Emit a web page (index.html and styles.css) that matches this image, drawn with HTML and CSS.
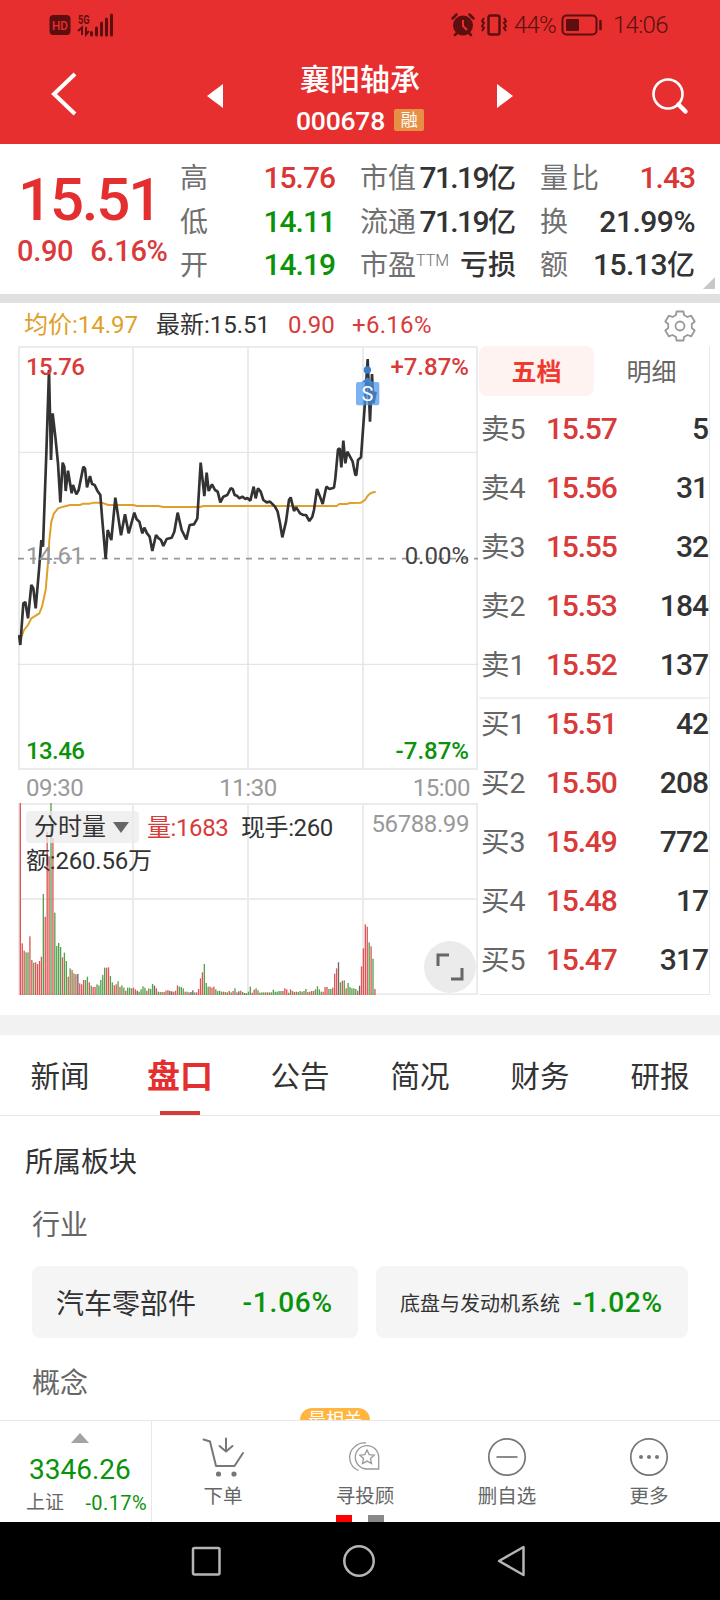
FILE: index.html
```html
<!DOCTYPE html>
<html lang="zh-CN">
<head>
    <meta charset="UTF-8" />
    <title>襄阳轴承 000678</title>
    <link rel="stylesheet" href="styles.css">
</head>
<body>
    <header>
        <div class="status-bar">
            <svg class="status-left" width="66" height="24" viewBox="0 0 66 24">
                <rect x="0.500" y="2" width="21" height="20" rx="4" fill="#5d0f0f"/>
                <text x="3" y="17" font-size="13" font-weight="500" textLength="16" lengthAdjust="spacingAndGlyphs" fill="#e72f2f">HD</text>
                <text x="29" y="10.500" font-size="13" font-weight="700" textLength="11.5" lengthAdjust="spacingAndGlyphs">5G</text>
                <path d="M29 18l4-3.500V22M37 14v7.500l3-3.500" fill="none" stroke="#5d0f0f" stroke-width="2"/>
                <path d="M42.500 19.500v2.500M47.500 15v7M52.500 10v12M57.500 6v16M62.500 2v20" fill="none" stroke="#5d0f0f" stroke-width="3" stroke-linecap="round"/>
            </svg>
            <div class="status-right">
                <svg width="24" height="24" viewBox="0 0 24 24">
                    <circle cx="12" cy="12.500" r="10" fill="#5d0f0f"/>
                    <path d="M1.500 5.500l4-4M22.500 5.500l-4-4M4 22l3-3M20 22l-3-3" stroke="#5d0f0f" stroke-width="2.500" stroke-linecap="round"/>
                    <path d="M12 7v6l4 4" fill="none" stroke="#e72f2f" stroke-width="2"/>
                </svg>
                <svg class="vibrate" width="28" height="24" viewBox="0 0 28 24">
                    <rect x="8.500" y="2.500" width="11" height="19" rx="2" fill="none" stroke="#5d0f0f" stroke-width="2.500"/>
                    <path d="M4 5l-2 3 2 2-2 3 2 2-2 3M24 5l2 3-2 2 2 3-2 2 2 3" fill="none" stroke="#5d0f0f" stroke-width="2"/>
                </svg>
                <span class="battery-text">44%</span>
                <svg class="battery" width="42" height="24" viewBox="0 0 42 24">
                    <rect x="1.500" y="2.500" width="34" height="19" rx="4" fill="none" stroke="#5d0f0f" stroke-width="2"/>
                    <rect x="5" y="6" width="13" height="12" rx="1" fill="#5d0f0f"/>
                    <path d="M39.500 8v8" stroke="#5d0f0f" stroke-width="2.500" stroke-linecap="round"/>
                </svg>
                <span class="clock">14:06</span>
            </div>
        </div>
        <div class="title-bar">
            <svg class="back" width="26" height="44" viewBox="0 0 26 44"><path d="M24 2L3 22l21 20" fill="none" stroke="#fff" stroke-width="4"/></svg>
            <svg class="prev" width="16" height="24" viewBox="0 0 16 24"><path d="M16 0v24L0 12z" fill="#fff"/></svg>
            <div class="stock-title">
                <h1>襄阳轴承</h1>
                <div class="stock-code"><span>000678</span><i>融</i></div>
            </div>
            <svg class="next" width="16" height="24" viewBox="0 0 16 24"><path d="M0 0v24l16-12z" fill="#fff"/></svg>
            <svg class="search" width="38" height="38" viewBox="0 0 38 38">
                <circle cx="17" cy="17" r="14.500" fill="none" stroke="#fff" stroke-width="2.600"/>
                <path d="M27.500 27.500l7 7" stroke="#fff" stroke-width="4.500" stroke-linecap="round"/>
            </svg>
        </div>
    </header>

    <section class="quote">
        <div class="now">
            <div class="price">15.51</div>
            <div class="change"><span>0.90</span><span>6.16%</span></div>
        </div>
        <dl class="col-a">
            <div><dt>高</dt><dd class="red">15.76</dd></div>
            <div><dt>低</dt><dd class="green">14.11</dd></div>
            <div><dt>开</dt><dd class="green">14.19</dd></div>
        </dl>
        <dl class="col-b">
            <div><dt>市值</dt><dd>71.19<b>亿</b></dd></div>
            <div><dt>流通</dt><dd>71.19<b>亿</b></dd></div>
            <div><dt>市盈<sup>TTM</sup></dt><dd><b>亏损</b></dd></div>
        </dl>
        <dl class="col-c">
            <div><dt class="wide">量比</dt><dd class="red">1.43</dd></div>
            <div><dt>换</dt><dd>21.99%</dd></div>
            <div><dt>额</dt><dd>15.13<b>亿</b></dd></div>
        </dl>
        <svg class="corner" width="12" height="12" viewBox="0 0 12 12"><path d="M12 0v12H0z" fill="#c8c8c8"/></svg>
    </section>

    <div class="chart-info">
        <span class="avg">均价:14.97</span>
        <span class="latest">最新:15.51</span>
        <span class="diff">0.90</span>
        <span class="pct">+6.16%</span>
        <svg class="gear" width="32" height="32" viewBox="0 0 32 32" fill="none" stroke="#999" stroke-width="1.800" stroke-linejoin="round">
            <path d="M12.500 1.500h7l.5 3.500 3.500 2 3.700-1.300 3.500 5.800-2.900 2.500v4l2.900 2.500-3.500 5.800-3.700-1.300-3.500 2-.5 3.500h-7l-.5-3.500-3.500-2-3.700 1.300-3.500-5.800 2.900-2.500v-4l-2.900-2.500 3.500-5.800L8.500 7 12 5z"/>
            <circle cx="16" cy="16" r="4.500"/>
        </svg>
    </div>

    <main class="trade">
        <div class="charts">
            <div class="price-chart">
                <!-- 3 units = 1px -->
                <svg width="460" height="424" viewBox="54 18 1380 1272" fill="none">
                    <path d="M54 21H1434M54 1287H1434M57 18V1290M399 18V1290M744 18V1290M1089 18V1290M1431 18V1290" stroke="#ebebeb" stroke-width="6"/>
                    <path d="M54 337H1434M54 973H1434" stroke="#e0e0e0" stroke-width="3"/>
                    <path d="M54 656H1434" stroke="#999" stroke-width="5" stroke-dasharray="18 18"/>
                    <polyline stroke="#dfa02a" stroke-width="6" stroke-linejoin="round" points="61,900 72,870 84,855 94,835 118,820 126,800 137,750 143,680 148,600 154,545 162,520 174,505 190,500 210,495 240,495 250,491 270,491 280,488 305,488 325,495 400,495 410,498 475,498 490,501 600,501 610,498 1010,498 1018,492 1040,492 1050,489 1083,488 1095,480 1105,465 1115,458 1127,455"/>
                    <polyline stroke="#333" stroke-width="8" stroke-linejoin="bevel" points="57,885 61,915 70,790 76,786 84,835 94,735 100,745 107,805 117,690 124,600 129,620 139,340 147,90 153,360 158,220 166,290 174,370 181,487 188,368 193,380 197,453 204,392 215,460 219,435 229,463 236,450 250,380 255,385 261,442 270,408 276,432 284,435 292,452 301,465 306,530 317,657 323,570 334,600 346,473 363,586 375,523 386,580 403,518 410,538 418,545 427,580 433,563 441,580 449,590 457,633 468,585 476,595 483,600 490,618 500,597 515,593 523,575 533,518 545,570 559,598 569,555 582,553 592,535 602,368 613,468 620,398 626,453 636,433 645,450 653,455 661,487 670,470 682,465 692,445 698,447 704,465 712,468 718,475 727,470 736,477 742,474 751,482 761,440 767,475 774,445 782,455 790,480 800,487 810,485 825,500 833,515 840,550 847,592 858,545 867,480 872,472 882,513 888,502 900,520 910,525 918,525 928,543 937,530 942,510 951,447 960,470 968,492 979,440 988,447 1002,443 1006,415 1014,328 1019,325 1024,382 1030,302 1036,370 1042,335 1058,365 1066,405 1069,405 1074,360 1083,352 1094,200 1103,57 1110,245 1116,102 1120,190 1127,155"/>
                    <circle cx="1102" cy="90" r="11" fill="#3b7ccb"/>
                    <path d="M1085 127l17-15 17 15z" fill="#4484cf"/>
                    <rect x="1068" y="126" width="70" height="70" rx="6" fill="#4a94ec" fill-opacity=".72"/>
                </svg>
                <span class="label high">15.76</span>
                <span class="label mid">14.61</span>
                <span class="label low">13.46</span>
                <span class="label pct-high">+7.87%</span>
                <span class="label pct-mid">0.00%</span>
                <span class="label pct-low">-7.87%</span>
                <span class="sell-mark">S</span>
            </div>
            <div class="times"><span>09:30</span><span>11:30</span><span>15:00</span></div>
            <div class="volume-chart">
                <svg width="460" height="192" viewBox="54 219 1380 576" fill="none">
                    <path d="M54 222H1434M54 507H1434M54 793H1434M57 219V795M399 219V795M744 219V795M1089 219V795M1431 219V795" stroke="#ebebeb" stroke-width="6"/>
                    <g id="bars"></g>
                </svg>
                <div class="volume-info">
                    <span class="picker">分时量<svg width="16" height="11" viewBox="0 0 16 11"><path d="M0 0h16L8 11z" fill="#666"/></svg></span>
                    <span class="vol">量:1683</span>
                    <span class="hand">现手:260</span>
                </div>
                <span class="amount">额:260.56万</span>
                <span class="volume-max">56788.99</span>
                <svg class="expand" width="52" height="52" viewBox="0 0 52 52">
                    <circle cx="26" cy="26" r="26" fill="#ebebeb"/>
                    <path d="M14 25V14h11M27 38h11V27" fill="none" stroke="#666" stroke-width="3"/>
                </svg>
            </div>
        </div>
        <aside class="levels">
            <div class="level-tabs"><span class="on">五档</span><span>明细</span></div>
            <ul class="sell">
                <li><span>卖5</span><em>15.57</em><strong>5</strong></li>
                <li><span>卖4</span><em>15.56</em><strong>31</strong></li>
                <li><span>卖3</span><em>15.55</em><strong>32</strong></li>
                <li><span>卖2</span><em>15.53</em><strong>184</strong></li>
                <li><span>卖1</span><em>15.52</em><strong>137</strong></li>
            </ul>
            <ul class="buy">
                <li><span>买1</span><em>15.51</em><strong>42</strong></li>
                <li><span>买2</span><em>15.50</em><strong>208</strong></li>
                <li><span>买3</span><em>15.49</em><strong>772</strong></li>
                <li><span>买4</span><em>15.48</em><strong>17</strong></li>
                <li><span>买5</span><em>15.47</em><strong>317</strong></li>
            </ul>
        </aside>
    </main>

    <nav class="tabs">
        <a>新闻</a>
        <a class="active">盘口</a>
        <a>公告</a>
        <a>简况</a>
        <a>财务</a>
        <a>研报</a>
    </nav>

    <section class="sectors">
        <h2>所属板块</h2>
        <h3>行业</h3>
        <div class="cards">
            <div class="card first"><span>汽车零部件</span><em>-1.06%</em></div>
            <div class="card second"><span class="small">底盘与发动机系统</span><em>-1.02%</em></div>
        </div>
        <h3 class="concept">概念</h3>
        <div class="hot-tag">最相关</div>
    </section>

    <footer>
        <div class="index">
            <svg width="18" height="10" viewBox="0 0 18 10"><path d="M9 0l9 10H0z" fill="#a3a3a3"/></svg>
            <div class="index-value">3346.26</div>
            <div class="index-row"><span>上证</span><em>-0.17%</em></div>
        </div>
        <div class="action">
            <svg width="44" height="40" viewBox="0 0 44 40" fill="none" stroke="#777" stroke-width="2" stroke-linecap="round" stroke-linejoin="round">
                <path d="M2.500 2.500l6.500 2L15 29h18.500L42 16"/>
                <path d="M25 1.500V14M18.500 9l6.500 5.500L31.500 9"/>
                <circle cx="17.500" cy="37" r="1.600" fill="#777"/><circle cx="33" cy="37" r="1.600" fill="#777"/>
            </svg>
            <span>下单</span>
        </div>
        <div class="action">
            <svg width="40" height="40" viewBox="0 0 40 40" fill="none" stroke="#999" stroke-width="1.300">
                <path d="M22 32h11.700V20.300a11.700 11.700 0 1 0-11.700 11.700z"/>
                <path d="M13.500 33.500A14 14 0 0 1 10 9.500a14 14 0 0 1 11-3.500"/>
                <path d="M22 13l2.200 4.600 5 .6-3.700 3.400 1 5-4.500-2.500-4.500 2.500 1-5-3.700-3.400 5-.6z"/>
            </svg>
            <span>寻投顾</span>
        </div>
        <div class="action">
            <svg width="40" height="40" viewBox="0 0 40 40" fill="none" stroke="#777" stroke-width="1.700"><circle cx="20" cy="20" r="18.200"/><path d="M9.500 20h21"/></svg>
            <span>删自选</span>
        </div>
        <div class="action">
            <svg width="40" height="40" viewBox="0 0 40 40"><circle cx="20" cy="20" r="18.200" fill="none" stroke="#777" stroke-width="1.700"/><g fill="#777"><circle cx="12" cy="20" r="2"/><circle cx="20" cy="20" r="2"/><circle cx="28" cy="20" r="2"/></g></svg>
            <span>更多</span>
        </div>
        <div class="pager"><i class="on"></i><i></i></div>
    </footer>

    <div class="system-nav">
        <svg width="32" height="32" viewBox="0 0 32 32"><rect x="3" y="3" width="26.500" height="26.500" rx="1.500"/></svg>
        <svg width="34" height="34" viewBox="0 0 34 34"><circle cx="17" cy="17" r="14.700"/></svg>
        <svg width="32" height="34" viewBox="0 0 32 34"><path d="M27.500 3v28L3 17z" stroke-linejoin="round"/></svg>
    </div>

    <script>
        // 每分钟成交量: 高度 + 颜色 (r 涨, g 跌, k 平)
        const volumes = "576r 155r 133r 128g 128g 176r 105r 97g 98r 93r 102r 115r 303g 235r 490r 416r 576g 470r 247g 147g 156g 144g 113r 127g 102g 55r 80g 75r 65g 62r 63k 35r 32r 45r 45g 55g 38r 28g 24r 24r 32g 29g 45g 60g 82g 82r 83r 57g 38g 29r 32r 41g 24r 29g 22g 13r 22g 22g 20g 22r 17r 13k 10g 17g 26g 22g 13r 20g 18g 33g 28k 20r 10g 9g 9r 9g 13r 15r 12k 11k 10r 13r 29r 25g 24g 20g 10r 10g 8r 9k 14k 8g 8r 18r 50r 68r 93g 36g 25g 25r 22r 25r 17g 12g 13g 10g 10r 9g 8r 12r 8g 12r 20g 8r 11k 13r 9g 6k 5k 10g 25g 7r 16r 20g 14r 7g 8g 8g 8r 8g 8r 8g 16g 10g 10g 12g 12g 12r 20r 17r 7g 17r 12g 9r 10r 9g 12g 10g 12r 18g 9r 10g 12r 12r 17g 26g 17g 10g 10r 24r 24r 18g 18g 22r 64r 80r 98k 38g 43r 44g 20r 36g 24g 20g 20g 18g 13r 28k 86r 140r 212r 205r 158g 146r 109g 18r".split(" ");
        const colors = { r: "#df5555", g: "#55a04c", k: "#666" };
        const bars = document.getElementById("bars");

        volumes.forEach((item, i) => {
            const h = parseInt(item);
            const rect = document.createElementNS("http://www.w3.org/2000/svg", "rect");
            rect.setAttribute("x", 59 + i * 5.75);
            rect.setAttribute("y", 795 - h);
            rect.setAttribute("width", 4);
            rect.setAttribute("height", h);
            rect.setAttribute("fill", colors[item.slice(-1)]);
            bars.appendChild(rect);
        });
    </script>
</body>
</html>
```
FILE: styles.css
```css
* {
    box-sizing: border-box;
}
body {
    margin: 0;
    width: 720px;
    height: 1600px;
    overflow: hidden;
    background: #fff;
    color: #333;
    font-family: Roboto, "Noto Sans CJK SC", sans-serif;
    white-space: nowrap;
}
svg {
    display: block;
    flex: none;
}
h1, h2, h3, dl, dd, ul {
    margin: 0;
    padding: 0;
    font-weight: 400;
}
em, i {
    font-style: normal;
}
b {
    font-size: 28px;
    font-weight: 500;
    letter-spacing: 0;
}
.red {
    color: #db3636;
}
.green {
    color: #0a930a;
}

/* 顶部 */
header {
    height: 144px;
    background: #e72f2f;
}
.status-bar {
    height: 48px;
    padding: 1px 50px 0 49px;
    display: flex;
    justify-content: space-between;
    align-items: center;
    color: #5d0f0f;
    font-size: 24px;
}
.status-left {
    fill: #5d0f0f;
}
.status-right {
    display: flex;
    align-items: center;
}
.vibrate {
    margin-left: 5px;
}
.battery-text {
    margin-left: 6px;
    width: 44px;
    font-weight: 300;
    letter-spacing: -0.8px;
}
.battery {
    margin-left: 3px;
}
.clock {
    margin-left: 10px;
    width: 57px;
    font-weight: 300;
    letter-spacing: -0.7px;
}
.title-bar {
    height: 96px;
    padding: 0 31px 0 51px;
    display: flex;
    align-items: flex-start;
    color: #fff;
}
.back {
    margin-top: 24px;
}
.prev {
    margin: 36px 0 0 130px;
}
.stock-title {
    width: 274px;
    padding-top: 11px;
    text-align: center;
}
.stock-title h1 {
    font-size: 30px;
    line-height: 42px;
    font-weight: 500;
}
.stock-code {
    display: flex;
    justify-content: center;
    align-items: center;
    height: 38px;
    font-size: 26.500px;
    font-weight: 500;
    letter-spacing: -0.2px;
}
.stock-code i {
    width: 30px;
    height: 22px;
    margin-left: 9px;
    border-radius: 2px;
    background: #e69046;
    font-size: 17px;
    font-weight: 400;
    line-height: 23px;
}
.next {
    margin-top: 36px;
}
.search {
    margin: 29px 0 0 auto;
}

/* 行情 */
.quote {
    position: relative;
    height: 159px;
    padding-top: 12px;
    border-bottom: 9px solid #e0e0e0;
    display: flex;
}
.now {
    width: 180px;
    padding-left: 17px;
    color: #e32f2f;
    font-weight: 500;
}
.price {
    margin: 9px 0 0 1px;
    font-size: 60px;
    line-height: 70px;
    letter-spacing: -2.200px;
}
.change {
    display: flex;
    gap: 17px;
    font-size: 29px;
    line-height: 32px;
    letter-spacing: -0.3px;
    color: #d93a3a;
}
.quote dl > div {
    display: flex;
    justify-content: space-between;
    height: 43.500px;
    line-height: 43.500px;
}
.quote dt {
    padding-top: 1px;
    font-size: 28px;
    color: #707070;
}
.quote dt.wide {
    letter-spacing: 3px;
}
.quote dd {
    font-size: 30px;
    font-weight: 500;
    letter-spacing: -1px;
}
.quote sup {
    font-size: 16px;
    font-weight: 300;
    line-height: 0;
    vertical-align: 9px;
}
.col-a {
    width: 155px;
}
.col-b {
    width: 156px;
    margin-left: 25px;
}
.quote .col-b dd {
    letter-spacing: -1.600px;
}
.quote .col-b b {
    letter-spacing: 0;
}
.col-c {
    width: 155px;
    margin-left: 24px;
}
.col-c div:nth-child(n + 2) dd {
    letter-spacing: -0.5px;
}
.corner {
    position: absolute;
    right: 5px;
    bottom: 5px;
}

/* 分时图 */
.chart-info {
    height: 43px;
    padding: 0 24px 0 24px;
    display: flex;
    align-items: center;
    font-size: 24px;
    line-height: 43px;
}
.chart-info span {
    padding-top: 2px;
}
.avg {
    width: 132px;
    color: #dfa02a;
}
.latest {
    width: 132px;
}
.diff {
    width: 64px;
    color: #d93a3a;
}
.pct {
    color: #d93a3a;
    letter-spacing: 0.3px;
}
.gear {
    margin: 2px 0 0 auto;
}
.trade {
    display: flex;
    height: 669px;
    padding-left: 18px;
}
.charts {
    width: 461px;
}
.price-chart,
.volume-chart {
    position: relative;
}
.label {
    position: absolute;
    font-size: 24px;
    line-height: 28px;
    font-weight: 500;
}
.high,
.mid,
.low {
    left: 8px;
    letter-spacing: -0.6px;
}
.pct-high,
.pct-mid,
.pct-low {
    right: 10px;
}
.high,
.pct-high {
    top: 7px;
    color: #d93a3a;
}
.mid,
.pct-mid {
    top: 196px;
    font-weight: 400;
}
.mid {
    color: #999;
}
.pct-mid {
    color: #444;
}
.low,
.pct-low {
    bottom: 5px;
    color: #0a930a;
}
.sell-mark {
    position: absolute;
    left: 338px;
    top: 37px;
    width: 23px;
    color: #fff;
    font-size: 20px;
    line-height: 23px;
    text-align: center;
}
.times {
    display: flex;
    justify-content: space-between;
    height: 33px;
    padding: 0 9px 0 8px;
    color: #999;
    font-size: 24px;
    line-height: 36px;
    letter-spacing: -0.5px;
}
.volume-info {
    position: absolute;
    left: 8px;
    top: 8px;
    display: flex;
    font-size: 24px;
    line-height: 34px;
    height: 32px;
    letter-spacing: -0.4px;
}
.picker {
    display: flex;
    align-items: center;
    gap: 7px;
    width: 113px;
    padding-left: 8px;
    border-radius: 4px;
    background: rgba(235, 235, 235, 0.75);
    letter-spacing: 0;
}
.vol {
    width: 94px;
    margin-left: 8px;
    color: #d93a3a;
}
.amount {
    position: absolute;
    left: 8px;
    top: 42px;
    font-size: 24px;
    line-height: 32px;
    letter-spacing: -0.2px;
}
.volume-max {
    position: absolute;
    right: 10px;
    top: 5px;
    color: #999;
    font-size: 24px;
    line-height: 32px;
    letter-spacing: -0.4px;
}
.expand {
    position: absolute;
    right: 3px;
    bottom: 2px;
}

/* 五档 */
.levels {
    width: 231px;
    height: 649px;
    border-right: 1px solid #e8e8e8;
    border-bottom: 1px solid #e8e8e8;
}
.level-tabs {
    display: flex;
    height: 53px;
    font-size: 25px;
    line-height: 53px;
    text-align: center;
    color: #666;
}
.level-tabs span {
    width: 115px;
    height: 50px;
    border-radius: 8px;
}
.level-tabs .on {
    background: #fff3f2;
    color: #f03a30;
    font-weight: 700;
}
.levels ul {
    list-style: none;
    height: 295px;
}
.levels .buy {
    background: linear-gradient(#f0f0f0, #f0f0f0) 0 3px / 100% 2px no-repeat;
}
.levels li {
    display: flex;
    height: 59px;
    padding: 0 1px 0 2px;
    font-size: 30px;
    line-height: 59px;
}
.levels li span {
    width: 65px;
    padding-top: 1px;
    font-size: 28.500px;
    color: #666;
}
.levels em {
    color: #d93a3a;
    font-weight: 500;
    letter-spacing: -1.200px;
}
.levels strong {
    margin-left: auto;
    font-weight: 500;
    letter-spacing: -1px;
}

/* 资讯标签 */
.tabs {
    display: flex;
    height: 101px;
    border-top: 20px solid #f2f2f2;
    border-bottom: 1px solid #e8e8e8;
}
.tabs a {
    position: relative;
    width: 120px;
    height: 80px;
    text-align: center;
    font-size: 29.500px;
    line-height: 84px;
}
.tabs .active {
    color: #e32f2f;
    font-size: 33px;
    font-weight: 700;
}
.tabs .active::after {
    content: "";
    position: absolute;
    left: 40px;
    bottom: 0;
    width: 40px;
    height: 4px;
    background: #d33a38;
}

/* 所属板块 */
.sectors {
    position: relative;
    height: 304px;
    padding: 26px 32px 0;
    overflow: hidden;
}
.sectors h2 {
    margin-left: -7px;
    font-size: 28px;
    line-height: 42px;
}
.sectors h3 {
    margin-top: 21px;
    font-size: 28px;
    line-height: 42px;
    color: #666;
}
.cards {
    display: flex;
    gap: 18px;
    margin-top: 19px;
}
.card {
    display: flex;
    justify-content: space-between;
    align-items: center;
    width: 326px;
    height: 72px;
    padding: 0 25px 0 24px;
    border-radius: 8px;
    background: #f5f5f5;
    font-size: 28px;
}
.card em {
    color: #0a930a;
    font-weight: 500;
    letter-spacing: 0.8px;
}
.card .small {
    font-size: 20px;
}
.second {
    width: 312px;
}
.sectors .concept {
    margin-top: 25px;
}
.hot-tag {
    position: absolute;
    left: 300px;
    top: 292px;
    width: 70px;
    height: 24px;
    border-radius: 12px;
    background: #ffb53f;
    color: #fff;
    font-size: 18px;
    line-height: 24px;
    text-align: center;
}

/* 底部 */
footer {
    position: relative;
    display: flex;
    height: 102px;
    border-top: 1px solid #e8e8e8;
}
.index {
    width: 152px;
    padding-top: 12px;
    border-right: 1px solid #e8e8e8;
    color: #0a930a;
}
.index > svg {
    margin-left: 71px;
}
.index-value {
    padding: 2px 0 0 29px;
    font-size: 28px;
    line-height: 50px;
}
.index-row {
    display: flex;
    justify-content: space-between;
    padding: 0 4px 0 26px;
    font-size: 20px;
    line-height: 16px;
}
.index-row em {
    letter-spacing: 0.4px;
}
.index-row span {
    font-size: 19px;
    color: #666;
}
.action {
    width: 142px;
    padding-top: 16px;
    display: flex;
    flex-direction: column;
    align-items: center;
    color: #666;
    font-size: 19.500px;
    line-height: 40px;
}
.pager {
    position: absolute;
    left: 336px;
    bottom: 0;
    display: flex;
    gap: 16px;
}
.pager i {
    width: 16px;
    height: 7px;
    background: #888;
}
.pager .on {
    background: #f00;
}
.system-nav {
    display: flex;
    align-items: center;
    justify-content: center;
    gap: 120px;
    height: 78px;
    padding-right: 2px;
    background: #000;
}
.system-nav svg {
    fill: none;
    stroke: #b5b5b5;
    stroke-width: 2.500;
}
```
